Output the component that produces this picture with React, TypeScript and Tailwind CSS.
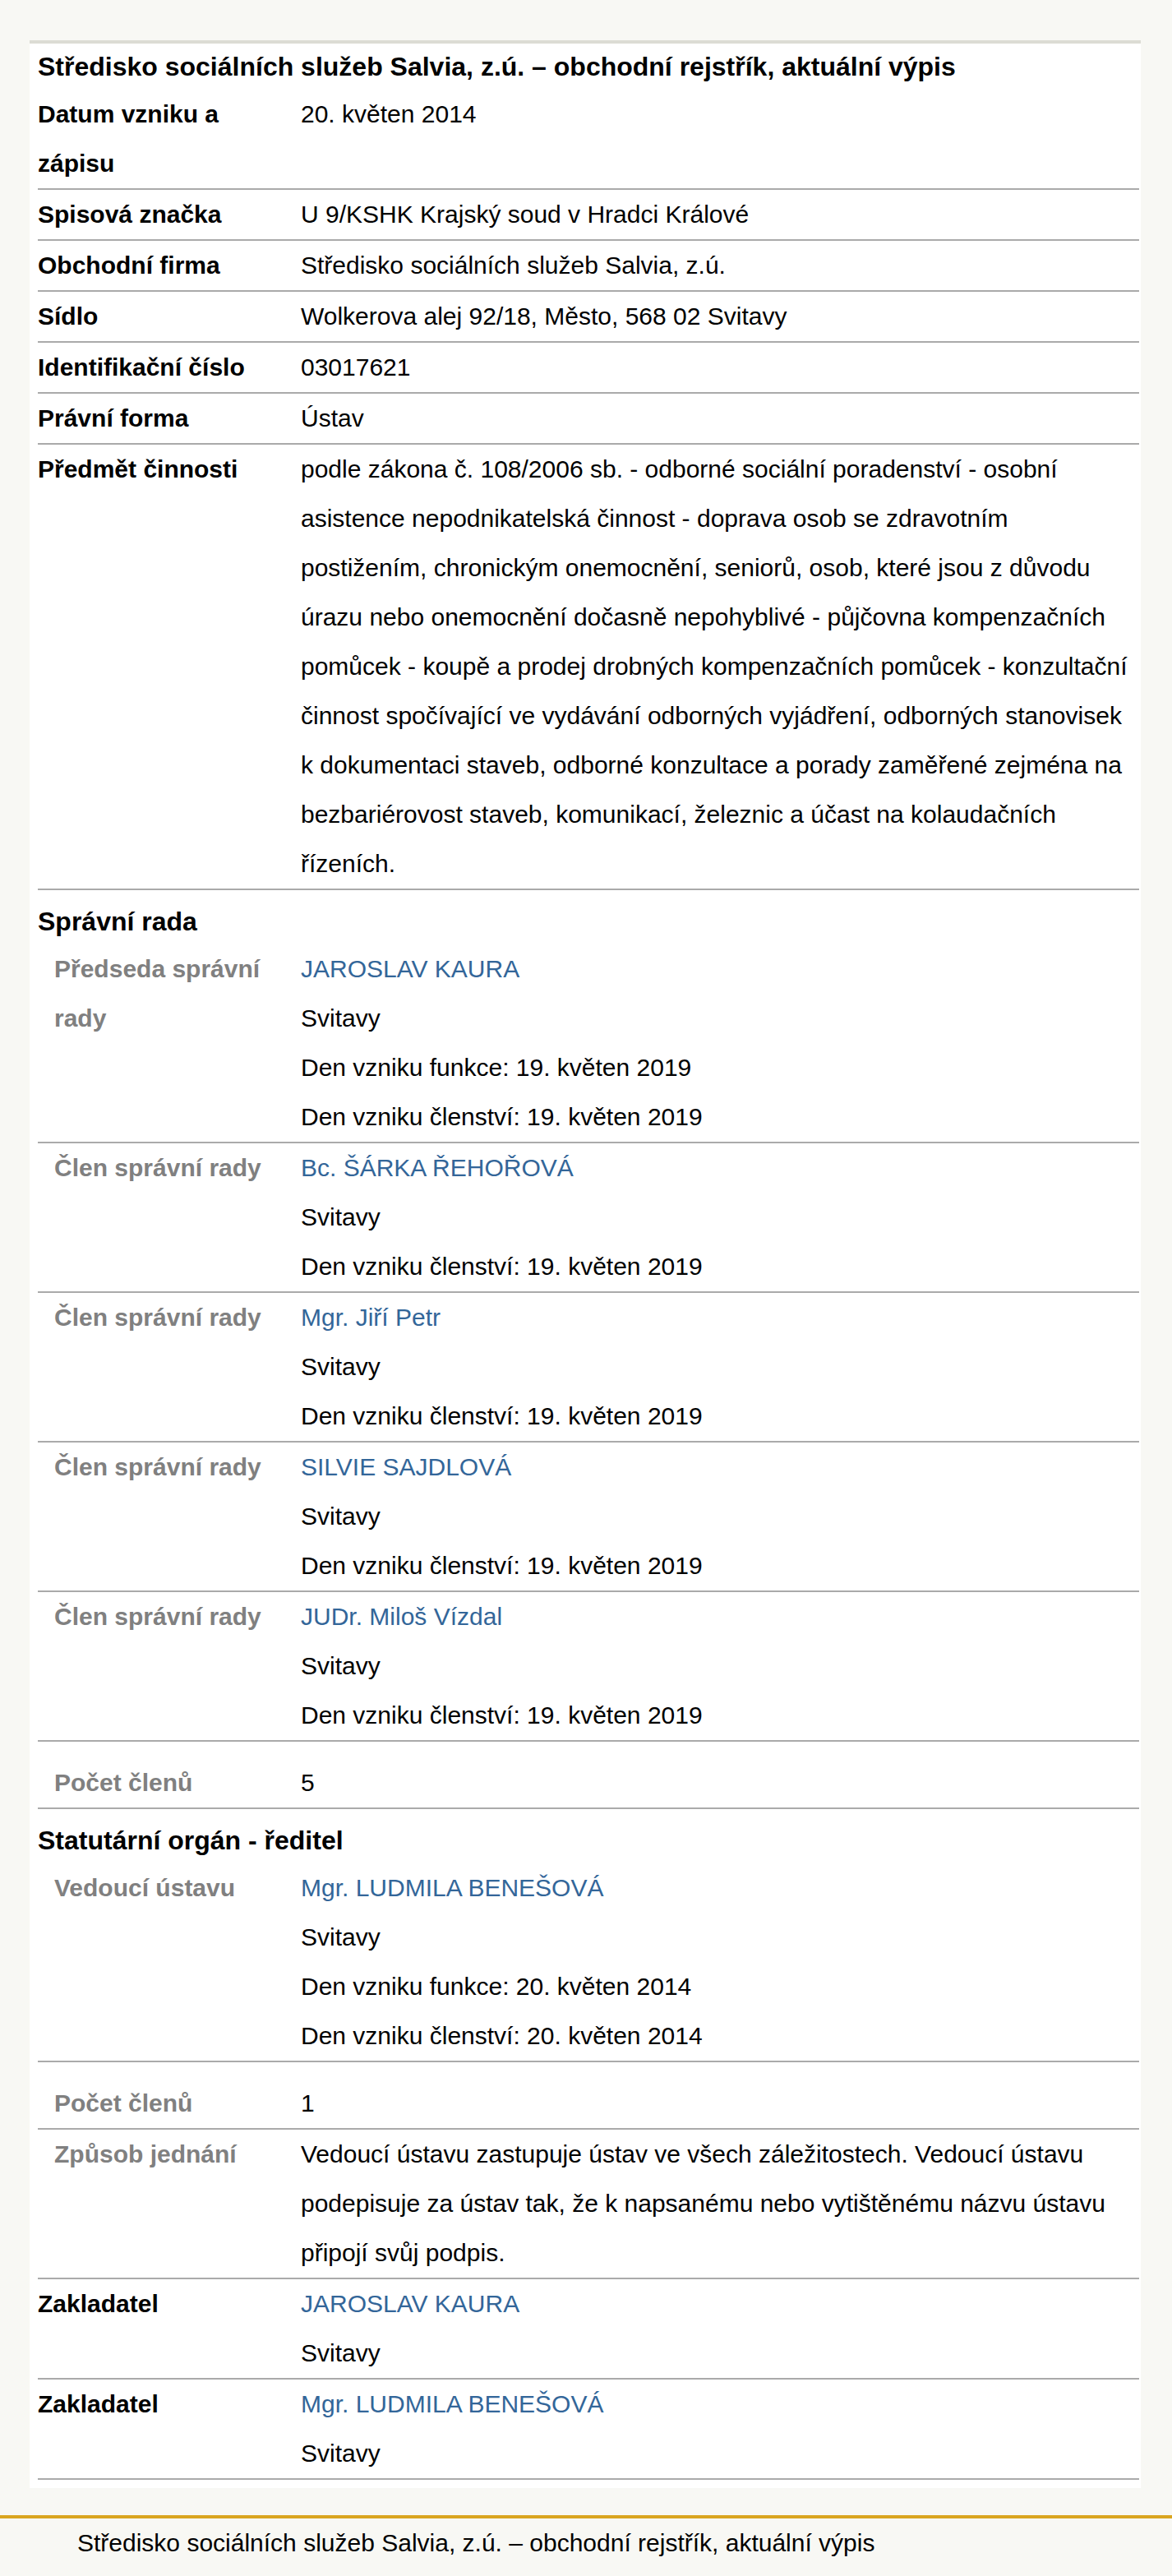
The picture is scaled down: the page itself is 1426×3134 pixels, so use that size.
import { ReactNode } from "react";

type line = { text: string, link?: boolean };

type fieldProps = {
  label: string,
  sub?: boolean,
  lines?: line[],
  padTop?: boolean,
  children?: ReactNode,
};

const TITLE = "Středisko sociálních služeb Salvia, z.ú. – obchodní rejstřík, aktuální výpis";

const PREDMET = "podle zákona č. 108/2006 sb. - odborné sociální poradenství - osobní asistence nepodnikatelská činnost - doprava osob se zdravotním postižením, chronickým onemocnění, seniorů, osob, které jsou z důvodu úrazu nebo onemocnění dočasně nepohyblivé - půjčovna kompenzačních pomůcek - koupě a prodej drobných kompenzačních pomůcek - konzultační činnost spočívající ve vydávání odborných vyjádření, odborných stanovisek k dokumentaci staveb, odborné konzultace a porady zaměřené zejména na bezbariérovost staveb, komunikací, železnic a účast na kolaudačních řízeních.";

const ZPUSOB = "Vedoucí ústavu zastupuje ústav ve všech záležitostech. Vedoucí ústavu podepisuje za ústav tak, že k napsanému nebo vytištěnému názvu ústavu připojí svůj podpis.";

const clen = (name: string): line[] => [
  { text: name, link: true },
  { text: "Svitavy" },
  { text: "Den vzniku členství: 19. květen 2019" },
];

//Members of the board, all with the same dates
const members = ["Bc. ŠÁRKA ŘEHOŘOVÁ", "Mgr. Jiří Petr", "SILVIE SAJDLOVÁ", "JUDr. Miloš Vízdal"];

const Field = ({ label, sub, lines, padTop, children }: fieldProps) => {
  return (
    <div className={`flex border-b-2 border-[#aaaaaa] ${padTop ? "pt-[20px]" : ""}`}>
      <div className={`w-[320px] shrink-0 pr-[10px] font-bold ${sub ? "pl-[20px] text-[#808080]" : "text-black"}`}>
        {label}
      </div>
      <div className="flex-1">
        {lines?.map((l, i) => (
          <div key={i} className={l.link ? "text-[#336699]" : "text-black"}>{l.text}</div>
        ))}
        {children}
      </div>
    </div>
  );
};

const Heading = ({ children }: { children: ReactNode }) => (
  <div className="pt-[10px] text-[32px] font-bold leading-[56px] text-black">{children}</div>
);

export default function App() {
  return (
    <div className="min-h-[3134px] bg-[#f8f8f4] pt-[49px] font-['Liberation_Sans',Arial,sans-serif] text-[30px] leading-[60px]">
      <div className="ml-[36px] w-[1352px] border-t-4 border-[#dcdcd4] bg-white pb-[10px] pl-[10px]">
        <div className="w-[1340px]">
          <div className="text-[32px] font-bold leading-[56px] text-black">{TITLE}</div>

          <Field label="Datum vzniku a zápisu" lines={[{ text: "20. květen 2014" }]} />
          <Field label="Spisová značka" lines={[{ text: "U 9/KSHK Krajský soud v Hradci Králové" }]} />
          <Field label="Obchodní firma" lines={[{ text: "Středisko sociálních služeb Salvia, z.ú." }]} />
          <Field label="Sídlo" lines={[{ text: "Wolkerova alej 92/18, Město, 568 02 Svitavy" }]} />
          <Field label="Identifikační číslo" lines={[{ text: "03017621" }]} />
          <Field label="Právní forma" lines={[{ text: "Ústav" }]} />
          <Field label="Předmět činnosti">
            <p>{PREDMET}</p>
          </Field>

          <Heading>Správní rada</Heading>
          <Field
            sub
            label="Předseda správní rady"
            lines={[
              { text: "JAROSLAV KAURA", link: true },
              { text: "Svitavy" },
              { text: "Den vzniku funkce: 19. květen 2019" },
              { text: "Den vzniku členství: 19. květen 2019" },
            ]}
          />
          {members.map((m) => (
            <Field key={m} sub label="Člen správní rady" lines={clen(m)} />
          ))}
          <Field sub padTop label="Počet členů" lines={[{ text: "5" }]} />

          <Heading>Statutární orgán - ředitel</Heading>
          <Field
            sub
            label="Vedoucí ústavu"
            lines={[
              { text: "Mgr. LUDMILA BENEŠOVÁ", link: true },
              { text: "Svitavy" },
              { text: "Den vzniku funkce: 20. květen 2014" },
              { text: "Den vzniku členství: 20. květen 2014" },
            ]}
          />
          <Field sub padTop label="Počet členů" lines={[{ text: "1" }]} />
          <Field sub label="Způsob jednání">
            <p>{ZPUSOB}</p>
          </Field>

          <Field label="Zakladatel" lines={[{ text: "JAROSLAV KAURA", link: true }, { text: "Svitavy" }]} />
          <Field label="Zakladatel" lines={[{ text: "Mgr. LUDMILA BENEŠOVÁ", link: true }, { text: "Svitavy" }]} />
        </div>
      </div>

      <footer className="mt-[33px] border-t-4 border-[#daa520] pb-[9px] pl-[94px] text-black">
        {TITLE}
      </footer>
    </div>
  );
}
